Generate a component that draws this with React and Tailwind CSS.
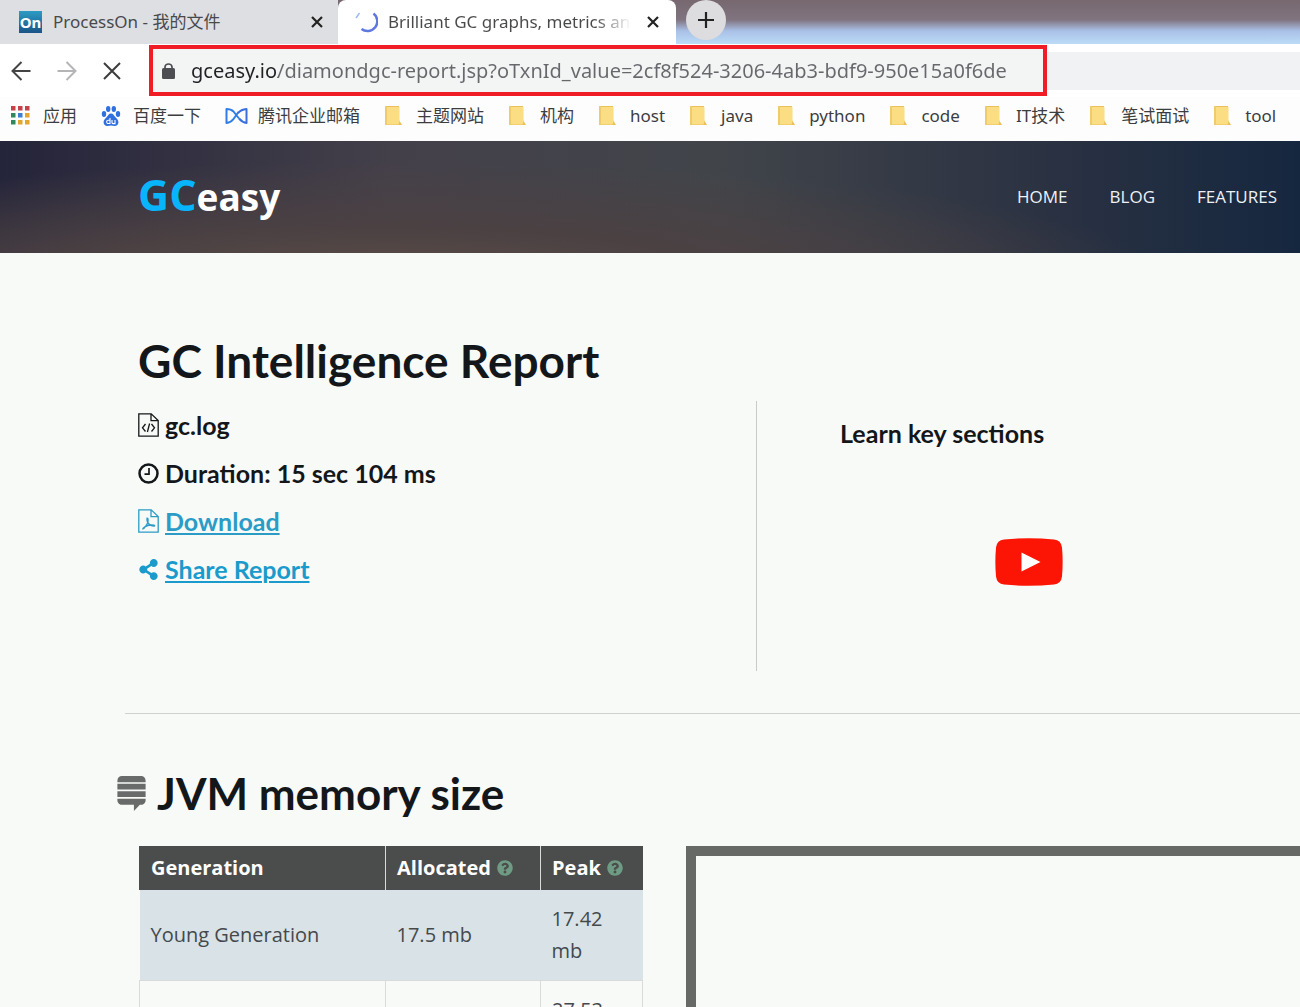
import React from "react";
import { FaShareAlt, FaStackExchange, FaQuestionCircle } from "react-icons/fa";

const folders = ["主题网站", "机构", "host", "java", "python", "code", "IT技术", "笔试面试", "tool"];

function FolderIcon() {
  return (
    <svg width="20" height="22" viewBox="0 0 20 22" aria-hidden="true">
      <path d="M1 1h14v14l3 5H1z" fill="#e9c05a" />
      <path d="M3 2h12.5v14.5l-1 3H2.500z" fill="#fbdd83" />
      <path d="M1 1h2v19H1z" fill="#f0cb6c" />
    </svg>
  );
}

function AppsIcon() {
  const colors = ["#c5424a", "#c5424a", "#c5424a", "#2f8a5b", "#3b7fd0", "#e2a72e", "#2f8a5b", "#e2a72e", "#e2a72e"];
  return (
    <svg width="20" height="20" viewBox="0 0 20 20" aria-hidden="true">
      {colors.map((c, i) => (
        <rect key={i} x={(i % 3) * 7} y={Math.floor(i / 3) * 7} width="4.500" height="4.500" fill={c} />
      ))}
    </svg>
  );
}

function PawIcon() {
  return (
    <svg width="20" height="22" viewBox="0 0 20 22" fill="#2f6fe0" aria-hidden="true">
      <ellipse cx="3" cy="9" rx="2.200" ry="2.900" />
      <ellipse cx="7.200" cy="4" rx="2.200" ry="3" />
      <ellipse cx="12.800" cy="4" rx="2.200" ry="3" />
      <ellipse cx="17" cy="9" rx="2.200" ry="2.900" />
      <path d="M10 8.500c-2.200 0-3 2-4.500 3.700C3.800 14 2.400 15 2.600 17.500c.2 2.400 1.900 3.700 4 3.500 1.300-.1 2.200-.4 3.400-.4s2.100.3 3.400.4c2.100.2 3.800-1.100 4-3.500.2-2.500-1.200-3.500-2.900-5.300C13 10.500 12.200 8.500 10 8.500z" />
      <path d="M9 13v5.500H7.300a1.600 1.600 0 0 1 0-3.300H9M11 15v2.600q0 1 1 1h2V15" fill="none" stroke="#fff" strokeWidth="1.100" />
    </svg>
  );
}

function MailIcon() {
  return (
    <svg width="23" height="18" viewBox="0 0 23 18" fill="none" strokeWidth="2" strokeLinejoin="round" aria-hidden="true">
      <path d="M14 11.500L8.500 4.500Q6 2 1.500 2v14q4.500-.5 7-4l5-7" stroke="#2f7de8" />
      <path d="M13 6q3-3.500 8.500-4v14q-4-.5-7.500-4.500" stroke="#3a6fe0" />
    </svg>
  );
}

function PageFrame({ children }) {
  return (
    <svg width="21" height="24" viewBox="0 0 21 24" fill="none" stroke="currentColor" strokeWidth="1.300" aria-hidden="true">
      <path d="M.8.8h12.400l7 6.700v15.700H.8zM13 .8v6.900h7.200" />
      {children}
    </svg>
  );
}

function CodeFileIcon() {
  return (
    <PageFrame>
      <path d="M7.500 11L4.500 14.800l3 3.700M13.500 11l3 3.800-3 3.700M11.600 10.500l-2.200 8.500" />
    </PageFrame>
  );
}

function PdfFileIcon() {
  return (
    <PageFrame>
      <path d="M9.300 8.500c-.8 2 .2 5 2 6.700 1.700 1.700 4 2.200 5.700 1.700M9.700 9c1 2.500 0 5.500-1.800 8-1.200 1.700-2.500 3-3.700 3.200M5 19.500c1.500-1.800 4.500-3.300 8.500-3.500 1.500 0 3 .2 3.600.8" />
    </PageFrame>
  );
}

function ClockIcon() {
  return (
    <svg width="21" height="21" viewBox="0 0 21 21" fill="none" stroke="currentColor" aria-hidden="true">
      <circle cx="10.500" cy="10.500" r="9" strokeWidth="2.500" />
      <path d="M11 5v6.200H6.500" strokeWidth="1.700" />
    </svg>
  );
}

function CloseIcon() {
  return (
    <svg width="12" height="12" viewBox="0 0 12 12" stroke="#222" strokeWidth="2.200" aria-hidden="true">
      <path d="M1 1l10 10M11 1L1 11" />
    </svg>
  );
}

function ArrowIcon({ flip }) {
  return (
    <svg width="20" height="20" viewBox="0 0 20 20" fill="none" stroke="currentColor" strokeWidth="2" className={flip ? "rotate-180" : ""} aria-hidden="true">
      <path d="M19.500 10H2M10.500 1L1.500 10l9 9" />
    </svg>
  );
}

function TabStrip() {
  return (
    <div className="flex h-11 shrink-0 bg-[linear-gradient(180deg,#77686f_0%,#807480_45%,#a9c0e6_70%,#bcdcf8_100%)]">
      <div className="flex w-[338px] shrink-0 items-center bg-[#dedfe2] pr-[15px] pl-[19px]">
        <span className="flex h-[22px] w-[23px] items-center justify-center bg-linear-to-b from-[#2c9cc4] to-[#1c5486] text-[15px] font-bold text-white">On</span>
        <span className="ml-[11px] flex-1 text-[17px] text-[#48494b]">ProcessOn - 我的文件</span>
        <button aria-label="关闭 ProcessOn"><CloseIcon /></button>
      </div>
      <div className="flex w-[338px] shrink-0 items-center rounded-t-lg bg-white pr-[17px] pl-[17px]">
        <svg width="23" height="24" viewBox="0 0 23 24" fill="none" aria-hidden="true">
          <path d="M18.500 3.500a9 9 0 0 1-12 15.500" stroke="#5f78e0" strokeWidth="2.500" />
          <path d="M1 8l3.500-5" stroke="#9dbbee" strokeWidth="1.500" />
        </svg>
        <span className="mr-4 ml-[10px] flex-1 overflow-hidden bg-[linear-gradient(90deg,#48494b_85%,#ffffff_100%)] bg-clip-text text-[17px] whitespace-nowrap text-transparent">Brilliant GC graphs, metrics an</span>
        <button aria-label="关闭 GCeasy"><CloseIcon /></button>
      </div>
      <button aria-label="新标签页" className="ml-[10px] flex size-10 items-center justify-center rounded-full bg-[#dddcdf]">
        <svg width="16" height="16" viewBox="0 0 16 16" stroke="#222" strokeWidth="2.200" aria-hidden="true">
          <path d="M8 0v16M0 8h16" />
        </svg>
      </button>
    </div>
  );
}

function Toolbar() {
  return (
    <div className="flex h-[53px] shrink-0 items-center bg-white">
      <div className="flex w-[149px] shrink-0 items-center gap-[26px] pl-[11px]">
        <button aria-label="后退" className="text-[#444]"><ArrowIcon /></button>
        <button aria-label="前进" className="text-[#b5b5b8]"><ArrowIcon flip /></button>
        <button aria-label="停止">
          <svg width="18" height="18" viewBox="0 0 18 18" stroke="#3c3c3c" strokeWidth="2" aria-hidden="true">
            <path d="M1 1l16 16M17 1L1 17" />
          </svg>
        </button>
      </div>
      <div className="flex h-[51px] w-[898px] shrink-0 items-center border-4 border-[#f01d27] bg-[#f3f4f4] pl-[9px]">
        <svg width="13" height="16" viewBox="0 0 13 16" aria-hidden="true">
          <rect x="0" y="5" width="13" height="11" rx="1.500" fill="#4c4e51" />
          <path d="M3 6V4a3.500 3 0 0 1 7 0v2" fill="none" stroke="#4c4e51" strokeWidth="1.700" />
        </svg>
        <input
          aria-label="地址"
          defaultValue="gceasy.io/diamondgc-report.jsp?oTxnId_value=2cf8f524-3206-4ab3-bdf9-950e15a0f6de"
          className="ml-4 min-w-0 flex-1 bg-[linear-gradient(90deg,#202124_87px,#66686b_87px)] bg-clip-text text-[20px] text-transparent outline-none"
        />
      </div>
      <div className="h-[38px] flex-1 bg-[#f1f2f3]" />
    </div>
  );
}

function Bookmarks() {
  const item = "flex shrink-0 items-center gap-3";
  return (
    <nav aria-label="书签" className="flex h-11 shrink-0 items-center gap-6 overflow-hidden bg-[#fdfdfd] pb-[6px] pl-[11px] text-[17px] whitespace-nowrap text-[#3c3d3f]">
      <a href="#apps" className={item}><AppsIcon />应用</a>
      <a href="#baidu" className={item}><PawIcon />百度一下</a>
      <a href="#mail" className="flex shrink-0 items-center gap-[10px]"><MailIcon />腾讯企业邮箱</a>
      {folders.map((f) => (
        <a key={f} href="#folder" className={item}><FolderIcon />{f}</a>
      ))}
    </nav>
  );
}

function SiteHeader() {
  return (
    <header className="flex h-28 shrink-0 items-center justify-between bg-[radial-gradient(ellipse_at_30%_120%,#5c4d48_0%,#4b4143_25%,transparent_60%),linear-gradient(90deg,#24243a_0%,#44404a_30%,#41454a_55%,#2b3242_80%,#15273f_100%)] pr-[23px] pl-[138px] font-['Open_Sans',sans-serif]">
      <a href="#home" className="pb-1 font-bold text-white">
        <span className="text-[43px] text-[#08b4fc]">GC</span>
        <span className="text-[37px]">easy</span>
      </a>
      <nav aria-label="GCeasy" className="flex gap-[42px] text-[17px] font-medium text-[#eef1f6]">
        <a href="#home">HOME</a>
        <a href="#blog">BLOG</a>
        <a href="#features">FEATURES</a>
      </nav>
    </header>
  );
}

function Report() {
  return (
    <section className="ml-[125px] shrink-0 border-b border-[#d0d2d1] pt-20 pb-[42px] pl-[13px] font-['Lato',sans-serif] font-bold text-[#14171a]">
      <h1 className="text-[46px] leading-[56px]">GC Intelligence Report</h1>
      <div className="mt-3 flex">
        <ul className="h-[270px] w-[619px] shrink-0 border-r border-[#c9cbca] text-[25px] leading-[48px]">
          <li className="flex items-center gap-[6px]"><CodeFileIcon />gc.log</li>
          <li className="flex items-center gap-[6px]"><ClockIcon />Duration: 15 sec 104 ms</li>
          <li><a href="#download" className="flex items-center gap-[6px] text-[#2b9cc6]"><PdfFileIcon /><span className="underline decoration-2 underline-offset-2">Download</span></a></li>
          <li><a href="#share" className="flex items-center gap-[6px] text-[#1a9bcb]"><FaShareAlt size={21} /><span className="underline decoration-2 underline-offset-2">Share Report</span></a></li>
        </ul>
        <div className="flex-1 pt-4 pl-[83px]">
          <h2 className="text-[25px] leading-8">Learn key sections</h2>
          <button aria-label="Play video" className="mt-[89px] ml-[155px] block">
            <svg width="68" height="48" viewBox="0 0 68 48" aria-hidden="true">
              <path d="M9 1.500Q34-1 59 1.500q7 .5 8 8 1.300 14.500 0 29-1 7.500-8 8-25 2.500-50 0-7-.5-8-8-1.300-14.500 0-29 1-7.500 8-8z" fill="#fc1404" />
              <path d="M26.500 14.500v19l19-9.500z" fill="#fff" />
            </svg>
          </button>
        </div>
      </div>
    </section>
  );
}

function Memory() {
  const cell = "border-x border-[#d9dbdb] px-[11px] py-[13px]";
  const head = "border-x border-[#d9dbdb] px-[11px] py-[6px] text-left font-bold first:border-l-[#4b4c4c] last:border-r-[#4b4c4c]";
  return (
    <section className="pt-[51px]">
      <h2 className="flex items-center gap-2 pl-[114px] font-['Lato',sans-serif] text-[44px] leading-[56px] font-bold text-[#14171a]">
        <FaStackExchange size={35} color="#696b6a" />JVM memory size
      </h2>
      <div className="mt-[25px] flex items-start pl-[139px] font-['Open_Sans',sans-serif] text-[20px] leading-8 text-[#45494c]">
        <table className="w-[504px] shrink-0 table-fixed border-collapse">
          <colgroup><col className="w-[246px]" /><col className="w-[155px]" /><col /></colgroup>
          <thead className="bg-[#4b4c4c] text-white">
            <tr>
              <th className={head}>Generation</th>
              <th className={head}><span className="flex items-center gap-[6px]">Allocated<FaQuestionCircle size={16} color="#6f9b84" /></span></th>
              <th className={head}><span className="flex items-center gap-[6px]">Peak<FaQuestionCircle size={16} color="#6f9b84" /></span></th>
            </tr>
          </thead>
          <tbody>
            <tr className="border-b border-[#d9dbdb] bg-[#d8e2e7]">
              <td className="px-[11px] py-[13px]">Young Generation</td>
              <td className="px-[11px] py-[13px]">17.5 mb</td>
              <td className="px-[11px] py-[13px]">17.42 mb</td>
            </tr>
            <tr>
              <td className={cell} />
              <td className={cell} />
              <td className={cell}>27.53 mb</td>
            </tr>
          </tbody>
        </table>
        <div className="ml-[43px] h-[400px] flex-1 border-t-10 border-l-10 border-[#676967]" />
      </div>
    </section>
  );
}

export default function App() {
  return (
    <div className="flex h-screen flex-col overflow-hidden bg-[#f8faf8] font-['Noto_Sans','Noto_Sans_CJK_SC',sans-serif]">
      <TabStrip />
      <Toolbar />
      <Bookmarks />
      <SiteHeader />
      <main>
        <Report />
        <Memory />
      </main>
    </div>
  );
}
